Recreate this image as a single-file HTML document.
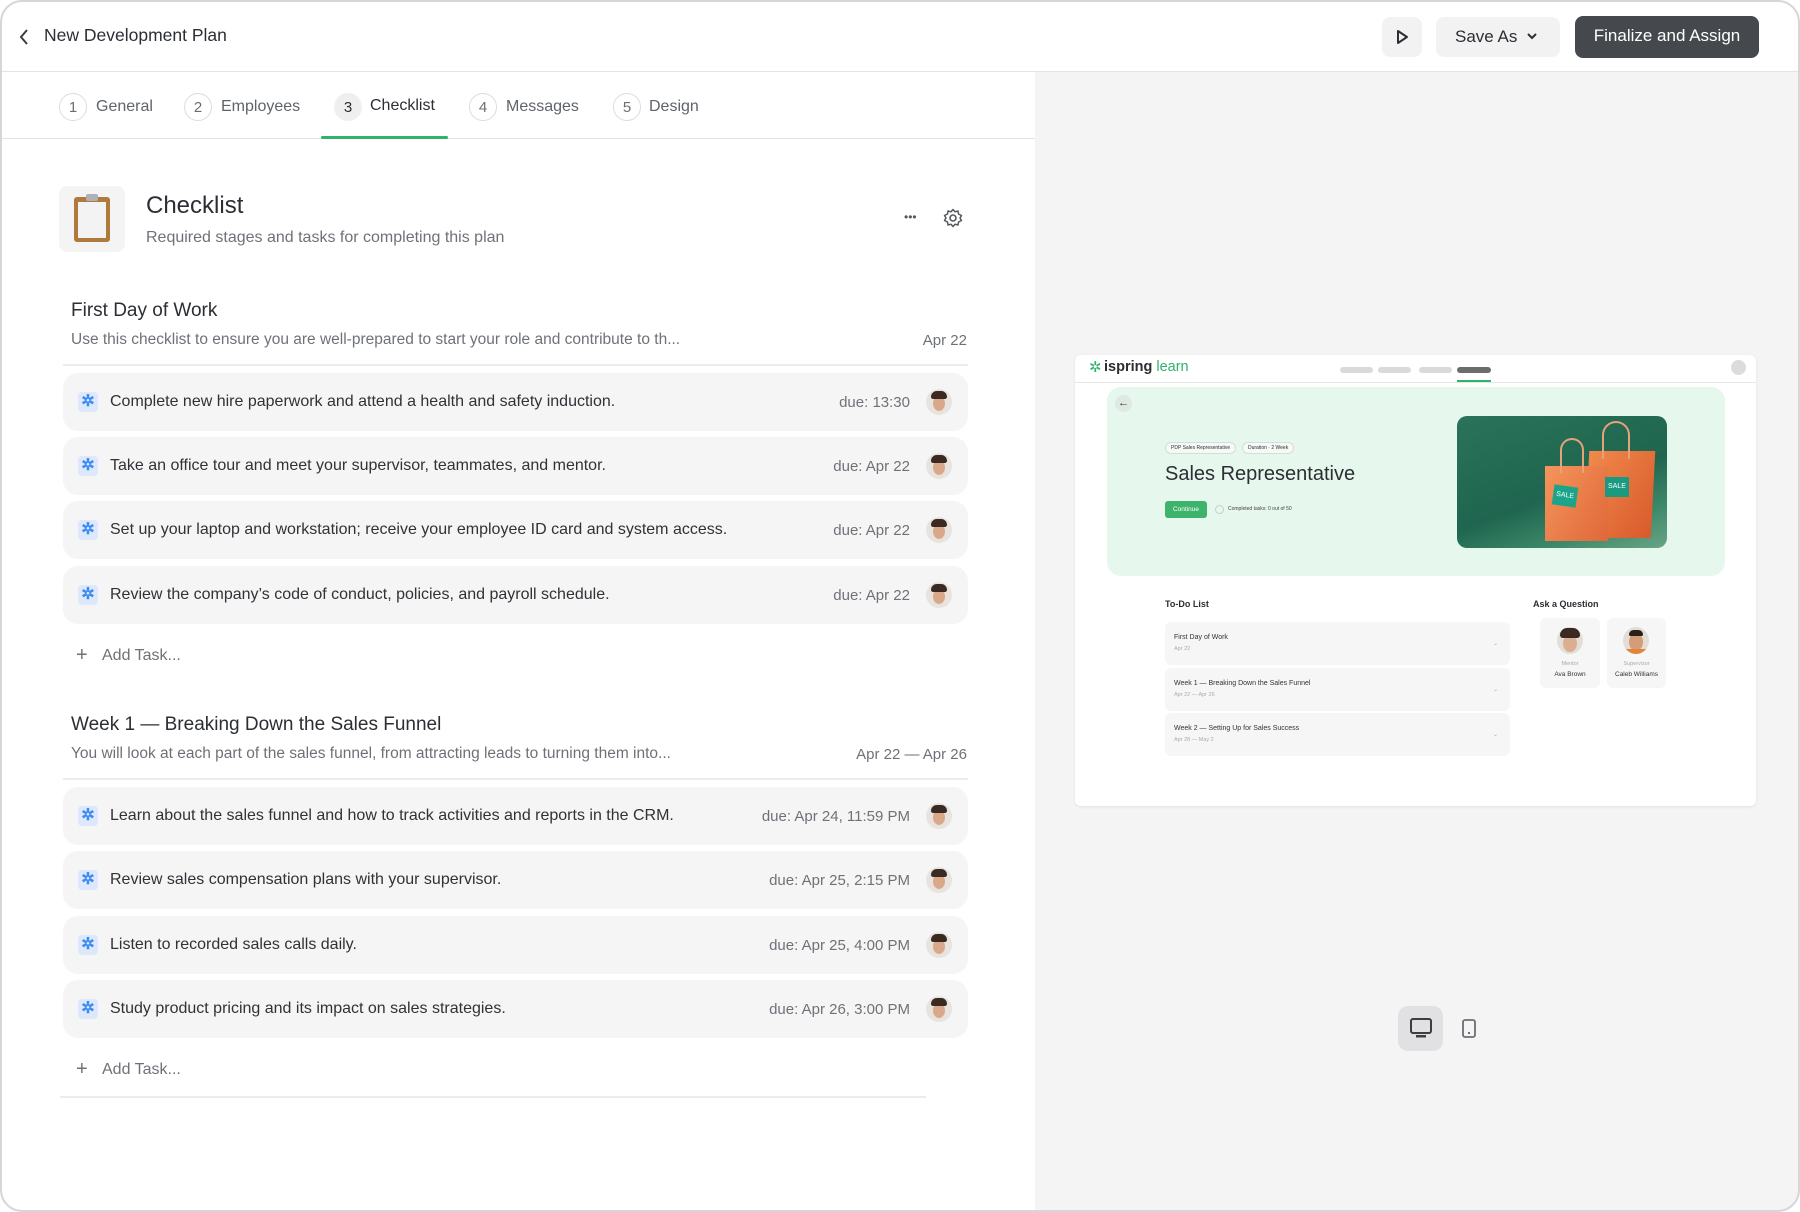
<!DOCTYPE html>
<html><head><meta charset="utf-8"><style>
*{box-sizing:border-box;margin:0;padding:0}
body{width:1800px;height:1212px;background:#fff;font-family:"Liberation Sans",sans-serif;color:#2b2e33;position:relative;overflow:hidden}
.a{position:absolute}
.frame{left:0;top:0;width:1800px;height:1212px;border-radius:22px;overflow:hidden;background:#fff}
.bord{left:0;top:0;width:1800px;height:1212px;border:2px solid #d6d6d6;border-radius:22px}
.t{white-space:nowrap}
.circ{width:28px;height:28px;border:1px solid #dcdcdc;border-radius:50%;font-size:15px;color:#6b6f75;display:flex;align-items:center;justify-content:center}
.tab{font-size:16px;color:#5f636a}
.row{left:63px;width:905px;height:58px;background:#f5f5f5;border-radius:15px}
.ic{left:15px;top:19px;width:20px;height:20px;background:#dde9fb;border-radius:4px;color:#3d8bf0;font-size:16px;line-height:20px;text-align:center;font-weight:bold}
.tx{left:47px;top:20px;font-size:16px;color:#2f3237}
.due{right:58px;top:21px;font-size:15px;color:#6e7278}
.av{right:16px;top:16px;width:26px;height:26px;border-radius:50%;background:#e8e3df;overflow:hidden}
.av:before{content:"";position:absolute;left:7px;top:7px;width:12px;height:15px;border-radius:50%;background:#d9a88a}
.av:after{content:"";position:absolute;left:5px;top:2px;width:16px;height:8px;border-radius:8px 8px 3px 3px;background:#3a2a22}
.sect{font-size:19px;color:#2b2e33}
.desc{font-size:15.5px;color:#6e7278}
.line{height:2px;background:#ececec}
.add{font-size:16px;color:#6e7278}
</style></head><body>
<div class="a frame">
<svg class="a" style="left:17px;top:28px" width="14" height="18" viewBox="0 0 14 18"><path d="M10 2 L4 9 L10 16" fill="none" stroke="#3a3d42" stroke-width="2"/></svg>
<div class="a t" style="left:44px;top:25px;font-size:17.5px;color:#2b2e33">New Development Plan</div>
<div class="a" style="left:1382px;top:17px;width:40px;height:40px;background:#f2f2f2;border-radius:8px"></div>
<svg class="a" style="left:1394px;top:29px" width="16" height="16" viewBox="0 0 16 16"><path d="M4 2 L13 8 L4 14 Z" fill="none" stroke="#2b2e33" stroke-width="2" stroke-linejoin="round"/></svg>
<div class="a" style="left:1436px;top:17px;width:124px;height:40px;background:#f2f2f2;border-radius:8px"></div>
<div class="a t" style="left:1455px;top:27px;font-size:17px;color:#2b2e33">Save As</div>
<svg class="a" style="left:1526px;top:31px" width="12" height="10" viewBox="0 0 12 10"><path d="M2 3 L6 7 L10 3" fill="none" stroke="#2b2e33" stroke-width="2"/></svg>
<div class="a" style="left:1575px;top:16px;width:184px;height:42px;background:#45494d;border-radius:8px;color:#fff;font-size:17px;text-align:center;line-height:40px">Finalize and Assign</div>
<div class="a" style="left:0;top:71px;width:1800px;height:1px;background:#e3e3e3"></div>
<div class="a" style="left:1035px;top:72px;width:765px;height:1140px;background:#f4f4f5"></div>
<div class="a circ" style="left:59px;top:93px">1</div><div class="a t tab" style="left:96px;top:98px">General</div>
<div class="a circ" style="left:184px;top:93px">2</div><div class="a t tab" style="left:221px;top:98px">Employees</div>
<div class="a circ" style="left:334px;top:93px;background:#efefef;border-color:#efefef;color:#2b2e33">3</div><div class="a t tab" style="left:370px;top:97px;color:#2b2e33">Checklist</div>
<div class="a circ" style="left:469px;top:93px">4</div><div class="a t tab" style="left:506px;top:98px">Messages</div>
<div class="a circ" style="left:613px;top:93px">5</div><div class="a t tab" style="left:649px;top:98px">Design</div>
<div class="a" style="left:0;top:138px;width:1035px;height:1px;background:#e3e3e3"></div>
<div class="a" style="left:321px;top:136px;width:127px;height:3px;background:#2fb36a;border-radius:2px"></div>
<div class="a" style="left:59px;top:186px;width:66px;height:66px;background:#f4f4f4;border-radius:8px"></div>
<div class="a" style="left:74px;top:197px;width:36px;height:45px;background:#b07a3f;border-radius:3px"></div>
<div class="a" style="left:78px;top:202px;width:28px;height:36px;background:#f3f3f3"></div>
<div class="a" style="left:86px;top:194px;width:12px;height:7px;background:#aeb2b6;border-radius:2px"></div>
<div class="a t" style="left:146px;top:192px;font-size:24px;color:#2b2e33">Checklist</div>
<div class="a t" style="left:146px;top:229px;font-size:16px;color:#6e7278">Required stages and tasks for completing this plan</div>
<div class="a t" style="left:904px;top:210px;font-size:12px;color:#55595f;letter-spacing:0px">•••</div>
<svg class="a" style="left:943px;top:208px" width="20" height="20" viewBox="0 0 20 20"><circle cx="10" cy="10" r="3" fill="none" stroke="#55595f" stroke-width="1.6"/><path d="M10 1.5 L12 3.8 L15 3 L15.5 6 L18.5 7.5 L17 10 L18.5 12.5 L15.5 14 L15 17 L12 16.2 L10 18.5 L8 16.2 L5 17 L4.5 14 L1.5 12.5 L3 10 L1.5 7.5 L4.5 6 L5 3 L8 3.8 Z" fill="none" stroke="#55595f" stroke-width="1.5" stroke-linejoin="round"/></svg>
<div class="a t sect" style="left:71px;top:300px">First Day of Work</div>
<div class="a t desc" style="left:71px;top:331px">Use this checklist to ensure you are well-prepared to start your role and contribute to th...</div>
<div class="a t desc" style="right:833px;top:332px;font-size:15px">Apr 22</div>
<div class="a line" style="left:63px;top:364px;width:905px"></div>
<div class="a row" style="top:373px"><div class="a ic">✲</div><div class="a t tx">Complete new hire paperwork and attend a health and safety induction.</div><div class="a t due">due: 13:30</div><div class="a av"></div></div>
<div class="a row" style="top:437px"><div class="a ic">✲</div><div class="a t tx">Take an office tour and meet your supervisor, teammates, and mentor.</div><div class="a t due">due: Apr 22</div><div class="a av"></div></div>
<div class="a row" style="top:501px"><div class="a ic">✲</div><div class="a t tx">Set up your laptop and workstation; receive your employee ID card and system access.</div><div class="a t due">due: Apr 22</div><div class="a av"></div></div>
<div class="a row" style="top:566px"><div class="a ic">✲</div><div class="a t tx">Review the company’s code of conduct, policies, and payroll schedule.</div><div class="a t due">due: Apr 22</div><div class="a av"></div></div>
<div class="a t add" style="left:76px;top:644px;font-size:20px">+</div><div class="a t add" style="left:102px;top:647px">Add Task...</div>
<div class="a t sect" style="left:71px;top:714px">Week 1 — Breaking Down the Sales Funnel</div>
<div class="a t desc" style="left:71px;top:745px">You will look at each part of the sales funnel, from attracting leads to turning them into...</div>
<div class="a t desc" style="right:833px;top:746px;font-size:15px">Apr 22 — Apr 26</div>
<div class="a line" style="left:63px;top:778px;width:905px"></div>
<div class="a row" style="top:787px"><div class="a ic">✲</div><div class="a t tx">Learn about the sales funnel and how to track activities and reports in the CRM.</div><div class="a t due">due: Apr 24, 11:59 PM</div><div class="a av"></div></div>
<div class="a row" style="top:851px"><div class="a ic">✲</div><div class="a t tx">Review sales compensation plans with your supervisor.</div><div class="a t due">due: Apr 25, 2:15 PM</div><div class="a av"></div></div>
<div class="a row" style="top:916px"><div class="a ic">✲</div><div class="a t tx">Listen to recorded sales calls daily.</div><div class="a t due">due: Apr 25, 4:00 PM</div><div class="a av"></div></div>
<div class="a row" style="top:980px"><div class="a ic">✲</div><div class="a t tx">Study product pricing and its impact on sales strategies.</div><div class="a t due">due: Apr 26, 3:00 PM</div><div class="a av"></div></div>
<div class="a t add" style="left:76px;top:1058px;font-size:20px">+</div><div class="a t add" style="left:102px;top:1061px">Add Task...</div>
<div class="a line" style="left:60px;top:1096px;width:866px"></div>
<div class="a" style="left:1075px;top:355px;width:681px;height:451px;background:#fff;border-radius:6px;box-shadow:0 1px 3px rgba(0,0,0,.08)">
 <div class="a t" style="left:14px;top:3px;font-size:15px;color:#2fb36a">✲</div>
 <div class="a t" style="left:29px;top:4px;font-size:14.5px;color:#2b2e33;font-weight:bold">ispring <span style="color:#2fb36a;font-weight:normal">learn</span></div>
 <div class="a" style="left:265px;top:12px;width:33px;height:6px;background:#dadada;border-radius:3px"></div>
 <div class="a" style="left:303px;top:12px;width:33px;height:6px;background:#dadada;border-radius:3px"></div>
 <div class="a" style="left:344px;top:12px;width:33px;height:6px;background:#dadada;border-radius:3px"></div>
 <div class="a" style="left:382px;top:12px;width:34px;height:6px;background:#6c6c6c;border-radius:3px"></div>
 <div class="a" style="left:382px;top:25px;width:34px;height:2px;background:#2fb36a"></div>
 <div class="a" style="left:656px;top:5px;width:15px;height:15px;background:#dcdcdc;border-radius:50%"></div>
 <div class="a" style="left:0;top:27px;width:681px;height:1px;background:#e6e6e6"></div>
 <div class="a" style="left:32px;top:32px;width:618px;height:189px;background:#e6f7ed;border-radius:14px"></div>
 <div class="a" style="left:40px;top:40px;width:17px;height:17px;background:#dfe8e2;border-radius:50%;font-size:11px;text-align:center;line-height:17px;color:#333">←</div>
 <div class="a t" style="left:90px;top:87px;height:12px;padding:0 5px;border:1px solid #d6dcd8;border-radius:6px;font-size:5px;line-height:10px;background:#f4faf6">PDP Sales Representative</div>
 <div class="a t" style="left:167px;top:87px;height:12px;padding:0 5px;border:1px solid #d6dcd8;border-radius:6px;font-size:5px;line-height:10px;background:#f4faf6">Duration · 2 Week</div>
 <div class="a t" style="left:90px;top:108px;font-size:20px;color:#2b2e33">Sales Representative</div>
 <div class="a" style="left:90px;top:146px;width:42px;height:17px;background:#3db36b;border-radius:3px;color:#fff;font-size:6.5px;text-align:center;line-height:17px">Continue</div>
 <div class="a" style="left:140px;top:150px;width:9px;height:9px;border:1px solid #ccc;border-radius:50%"></div>
 <div class="a t" style="left:153px;top:151px;font-size:5px;color:#444">Completed tasks: 0 out of 50</div>
 <div class="a" style="left:382px;top:61px;width:210px;height:132px;border-radius:10px;overflow:hidden;background:linear-gradient(160deg,#2a735a 0%,#1f654f 55%,#3f8a6a 80%,#6aa487 100%)">
  <div class="a" style="left:130px;top:35px;width:66px;height:87px;background:linear-gradient(120deg,#f08a4c,#d95a2c);transform:skewX(-3deg)"></div>
  <div class="a" style="left:145px;top:5px;width:28px;height:38px;border:2px solid #e8a27a;border-bottom:none;border-radius:14px 14px 0 0"></div>
  <div class="a" style="left:88px;top:50px;width:63px;height:75px;background:linear-gradient(120deg,#f4955a,#e0673a)"></div>
  <div class="a" style="left:103px;top:22px;width:24px;height:35px;border:2px solid #e8a27a;border-bottom:none;border-radius:12px 12px 0 0"></div>
  <div class="a" style="left:96px;top:70px;width:24px;height:20px;background:#1aa58a;transform:rotate(8deg);font-size:7px;color:#fff;text-align:center;line-height:20px">SALE</div>
  <div class="a" style="left:148px;top:61px;width:24px;height:20px;background:#1a9a80;font-size:7px;color:#fff;text-align:center;line-height:20px">SALE</div>
 </div>
 <div class="a t" style="left:90px;top:244px;font-size:9px;font-weight:bold;color:#2b2e33">To-Do List</div>
 <div class="a" style="left:90px;top:267px;width:345px;height:43px;background:#f6f6f6;border-radius:6px"><div class="a t" style="left:9px;top:12px;font-size:7px;color:#333">First Day of Work</div><div class="a t" style="left:9px;top:24px;font-size:5.5px;color:#aaa">Apr 22</div><div class="a" style="right:12px;top:18px;font-size:6px;color:#aaa">⌄</div></div>
 <div class="a" style="left:90px;top:313px;width:345px;height:43px;background:#f6f6f6;border-radius:6px"><div class="a t" style="left:9px;top:12px;font-size:7px;color:#333">Week 1 — Breaking Down the Sales Funnel</div><div class="a t" style="left:9px;top:24px;font-size:5.5px;color:#aaa">Apr 22 — Apr 26</div><div class="a" style="right:12px;top:18px;font-size:6px;color:#aaa">⌄</div></div>
 <div class="a" style="left:90px;top:358px;width:345px;height:43px;background:#f6f6f6;border-radius:6px"><div class="a t" style="left:9px;top:12px;font-size:7px;color:#333">Week 2 —  Setting Up for Sales Success</div><div class="a t" style="left:9px;top:24px;font-size:5.5px;color:#aaa">Apr 28 — May 2</div><div class="a" style="right:12px;top:18px;font-size:6px;color:#aaa">⌄</div></div>
 <div class="a t" style="left:458px;top:244px;font-size:9px;font-weight:bold;color:#2b2e33">Ask a Question</div>
 <div class="a" style="left:465px;top:263px;width:60px;height:70px;background:#f6f6f6;border-radius:6px"><div class="a" style="left:17px;top:9px;width:26px;height:27px;border-radius:50%;background:#e3ddd8;overflow:hidden"><div class="a" style="left:6px;top:8px;width:14px;height:17px;border-radius:50%;background:#dcae90"></div><div class="a" style="left:3px;top:1px;width:20px;height:10px;border-radius:10px 10px 4px 4px;background:#3a2a22"></div></div><div class="a t" style="left:0;width:60px;top:43px;font-size:5.5px;color:#aaa;text-align:center">Mentor</div><div class="a t" style="left:0;width:60px;top:53px;font-size:6.5px;color:#333;text-align:center">Ava Brown</div></div>
 <div class="a" style="left:532px;top:263px;width:59px;height:70px;background:#f6f6f6;border-radius:6px"><div class="a" style="left:16px;top:9px;width:26px;height:27px;border-radius:50%;background:#e3ddd8;overflow:hidden"><div class="a" style="left:6px;top:6px;width:14px;height:18px;border-radius:50%;background:#d59c78"></div><div class="a" style="left:6px;top:3px;width:14px;height:6px;border-radius:6px 6px 2px 2px;background:#2b211c"></div><div class="a" style="left:3px;top:22px;width:20px;height:8px;background:#e0843a"></div></div><div class="a t" style="left:0;width:59px;top:43px;font-size:5.5px;color:#aaa;text-align:center">Supervisor</div><div class="a t" style="left:0;width:59px;top:53px;font-size:6.5px;color:#333;text-align:center">Caleb Williams</div></div>
</div>
<div class="a" style="left:1398px;top:1006px;width:45px;height:45px;background:#e1e1e3;border-radius:10px"></div>
<svg class="a" style="left:1409px;top:1017px" width="24" height="22" viewBox="0 0 24 22"><rect x="2" y="2" width="20" height="14" rx="2" fill="none" stroke="#3a3d42" stroke-width="2"/><rect x="7" y="18" width="10" height="2.5" fill="#3a3d42"/></svg>
<svg class="a" style="left:1461px;top:1018px" width="16" height="22" viewBox="0 0 16 22"><rect x="2" y="2" width="12" height="17" rx="2" fill="none" stroke="#6b6f75" stroke-width="1.8"/><rect x="7" y="14" width="2" height="2" fill="#6b6f75"/></svg>
</div>
<div class="a bord"></div>
</body></html>
